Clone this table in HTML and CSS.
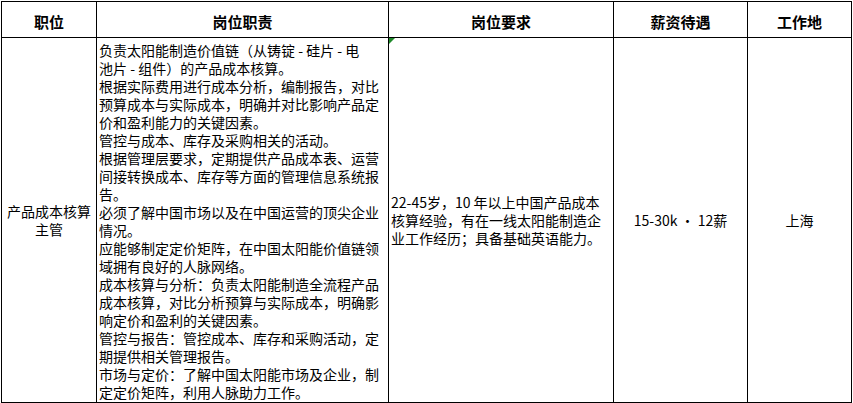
FILE: index.html
```html
<!DOCTYPE html>
<html lang="zh-CN">
<head>
<meta charset="utf-8">
<title>岗位信息</title>
<link rel="stylesheet" href="styles.css">
</head>
<body>
<table class="jobs">
  <colgroup>
    <col class="c-title">
    <col class="c-duty">
    <col class="c-req">
    <col class="c-pay">
    <col class="c-city">
  </colgroup>
  <thead>
    <tr>
      <th>职位</th>
      <th>岗位职责</th>
      <th>岗位要求</th>
      <th>薪资待遇</th>
      <th>工作地</th>
    </tr>
  </thead>
  <tbody>
    <tr>
      <td class="title">产品成本核算主管</td>
      <td class="duty">
        <div class="duty-text">
          <p>负责太阳能制造价值链（从铸锭 - 硅片 - 电<br>池片 - 组件）的产品成本核算。</p>
          <p>根据实际费用进行成本分析，编制报告，对比预算成本与实际成本，明确并对比影响产品定价和盈利能力的关键因素。</p>
          <p>管控与成本、库存及采购相关的活动。</p>
          <p>根据管理层要求，定期提供产品成本表、运营间接转换成本、库存等方面的管理信息系统报告。</p>
          <p>必须了解中国市场以及在中国运营的顶尖企业情况。</p>
          <p>应能够制定定价矩阵，在中国太阳能价值链领域拥有良好的人脉网络。</p>
          <p>成本核算与分析：负责太阳能制造全流程产品成本核算，对比分析预算与实际成本，明确影响定价和盈利的关键因素。</p>
          <p>管控与报告：管控成本、库存和采购活动，定期提供相关管理报告。</p>
          <p>市场与定价：了解中国太阳能市场及企业，制定定价矩阵，利用人脉助力工作。</p>
        </div>
      </td>
      <td class="req">22-45岁，10 年以上中国产品成本核算经验，有在一线太阳能制造企业工作经历；具备基础英语能力。</td>
      <td class="pay">15-30k · 12薪</td>
      <td class="city">上海</td>
    </tr>
  </tbody>
</table>
</body>
</html>
```
FILE: styles.css
```css
html, body {
  margin: 0;
  padding: 0;
  background: #ffffff;
}

body {
  font-family: "Noto Sans CJK SC", "Noto Sans", sans-serif;
  font-size: 14px;
  color: #000000;
}

.jobs {
  border-collapse: collapse;
  table-layout: fixed;
  margin: 1px 0 0 1px;
  width: 850px;
}

.c-title { width: 95px; }
.c-duty  { width: 292px; }
.c-req   { width: 225px; }
.c-pay   { width: 134px; }
.c-city  { width: 104px; }

.jobs th,
.jobs td {
  border: 1px solid #000000;
  padding: 0 2px;
}

.jobs th {
  height: 30px;
  padding-top: 5px;
  padding-bottom: 0;
  font-size: 15px;
  font-weight: bold;
  text-align: center;
  vertical-align: middle;
  line-height: 18px;
}

.jobs td {
  line-height: 18px;
  vertical-align: middle;
}

.title {
  text-align: center;
  padding-top: 6px;
}

.duty {
  vertical-align: top;
}

.duty-text {
  height: 364px;
  overflow: hidden;
  padding-top: 3px;
  box-sizing: border-box;
}

.duty-text p {
  margin: 0;
}

.req {
  position: relative;
  padding: 5px 8px 18px 2px;
}

.req::before {
  content: "";
  position: absolute;
  top: 0;
  left: 0;
  width: 0;
  height: 0;
  border-top: 6px solid #1f8a2a;
  border-right: 6px solid transparent;
}

.pay,
.city {
  text-align: center;
  padding-top: 5px;
}
```
